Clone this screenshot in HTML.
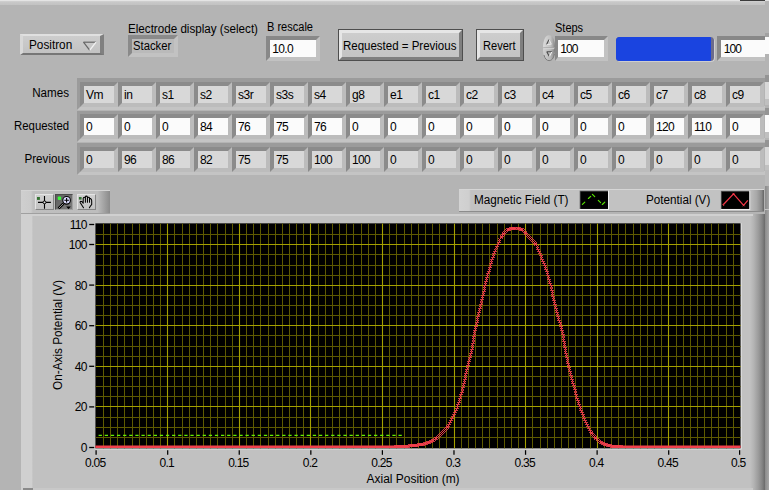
<!DOCTYPE html>
<html><head><meta charset="utf-8"><title>Electrode potentials</title>
<style>
html,body{margin:0;padding:0;}
body{width:769px;height:490px;overflow:hidden;background:#b4b4b4;position:relative;font-family:"Liberation Sans",sans-serif;font-size:12px;color:#000;}
.a{position:absolute;box-sizing:border-box;}
.t{position:absolute;white-space:pre;line-height:normal;font-family:"Liberation Sans",sans-serif;}
.frame{position:absolute;box-sizing:border-box;border:4px solid;border-color:#9b9b9b #c4c4c4 #c4c4c4 #9b9b9b;}
.cell{position:absolute;box-sizing:border-box;border:4px solid;border-color:#8b8b8b #bcbcbc #bcbcbc #8b8b8b;}
.ind{background:#d8d8d8;}
.ctl{background:#fbfbfb;}
.btn{position:absolute;box-sizing:border-box;border:1px solid #4e4e4e;background:linear-gradient(#cecece,#c3c3c3);}
.btn:before{content:"";position:absolute;left:0;top:0;right:0;bottom:0;border:3px solid;border-color:#e6e6e6 #7f7f7f #7f7f7f #e6e6e6;}
</style></head><body>

<div class="a" style="left:0;top:0;width:769px;height:1px;background:#e4e4e4"></div>
<div class="a" style="left:0;top:1px;width:765px;height:4px;background:linear-gradient(#d2d2d2,#c8c8c8 30%,#c2c2c2)"></div>
<div class="a" style="left:740px;top:0;width:25px;height:1px;background:#3c3c3c"></div>
<div class="a" style="left:20px;top:33.8px;width:84px;height:21.4px;background:linear-gradient(#cdcdcd,#c2c2c2);border-style:solid;border-width:2px 4px 2px 3px;border-color:#e0e0e0 #808080 #767676 #d8d8d8"></div>
<div class="t" style="left:28.90px;top:38.34px;font-size:12px;color:#000;transform:scaleX(0.9811);transform-origin:left center;">Positron</div>
<svg class="a" style="left:82px;top:40px" width="16" height="12" viewBox="0 0 16 12"><path d="M1.5 2.2 L14 2.2" stroke="#666" stroke-width="1.2" fill="none"/><path d="M1.5 2.2 L7.6 10.2" stroke="#666" stroke-width="1.2" fill="none"/><path d="M14 2.2 L7.8 10.2" stroke="#f2f2f2" stroke-width="1.3" fill="none"/></svg>
<div class="t" style="left:127.70px;top:21.74px;font-size:12px;color:#000;transform:scaleX(0.9697);transform-origin:left center;">Electrode display (select)</div>
<div class="cell" style="left:128px;top:34.5px;width:50px;height:22px;background:#bababa;border-color:#8a8a8a #c2c2c2 #c2c2c2 #8a8a8a"></div>
<div class="t" style="left:132.80px;top:38.64px;font-size:12px;color:#000;transform:scaleX(0.9388);transform-origin:left center;">Stacker</div>
<div class="t" style="left:267.40px;top:19.64px;font-size:12px;color:#000;transform:scaleX(0.9194);transform-origin:left center;">B rescale</div>
<div class="cell ctl" style="left:266px;top:36.3px;width:54px;height:24.6px;border-color:#888 #c2c2c2 #c2c2c2 #888"></div>
<div class="t" style="left:272.20px;top:41.74px;font-size:12px;color:#000;letter-spacing:-0.6px;">10.0</div>
<div class="btn" style="left:338px;top:28.8px;width:125px;height:32.4px"></div>
<div class="t" style="left:342.80px;top:38.64px;font-size:12px;color:#000;transform:scaleX(0.9577);transform-origin:left center;">Requested = Previous</div>
<div class="btn" style="left:475.6px;top:28.8px;width:48.6px;height:32.4px"></div>
<div class="t" style="left:483.00px;top:38.54px;font-size:12px;color:#000;transform:scaleX(0.9225);transform-origin:left center;">Revert</div>
<div class="t" style="left:554.60px;top:20.74px;font-size:12px;color:#000;transform:scaleX(0.9156);transform-origin:left center;">Steps</div>
<svg class="a" style="left:540.5px;top:34px" width="16" height="29" viewBox="0 0 16 29">
<defs><linearGradient id="sp" x1="0" x2="1" y1="0" y2="0"><stop offset="0" stop-color="#dcdcdc"/><stop offset="0.25" stop-color="#d0d0d0"/><stop offset="0.62" stop-color="#c2c2c2"/><stop offset="0.82" stop-color="#a8a8a8"/><stop offset="1" stop-color="#808080"/></linearGradient>
<linearGradient id="sp2" x1="0" x2="1" y1="0" y2="0"><stop offset="0" stop-color="#d2d2d2"/><stop offset="0.25" stop-color="#c6c6c6"/><stop offset="0.62" stop-color="#b8b8b8"/><stop offset="0.82" stop-color="#9c9c9c"/><stop offset="1" stop-color="#7a7a7a"/></linearGradient></defs>
<path d="M2 14.2 C2 7.5 3.8 1.3 8 1.3 C12.4 1.3 14 7.5 14 14.2 Z" fill="url(#sp)"/>
<path d="M2 14.4 C2 21 3.8 26.8 8 26.8 C12.4 26.8 14 21 14 14.4 Z" fill="url(#sp2)"/>
<path d="M2.2 13.7 H13.8" stroke="#a6a6a6" stroke-width="0.9"/><path d="M2.2 14.7 H13" stroke="#dadada" stroke-width="0.9"/>
<path d="M3 21 C3.8 24.6 5.6 26.6 8 26.6 C10.6 26.6 12.6 24.4 13.4 20" stroke="#7c7c7c" stroke-width="1" fill="none"/>
<path d="M5.6 10.4 L8 5.6" stroke="#4a4a4a" stroke-width="1.1" fill="none"/><path d="M8 5.6 L10.3 10.2 L5.8 10.6" stroke="#ececec" stroke-width="0.9" fill="none"/>
<path d="M5.6 17.8 L10.8 17.8 M5.8 17.8 L8.2 22.2" stroke="#4a4a4a" stroke-width="1.1" fill="none"/><path d="M10.8 18 L8.4 22.4" stroke="#f2f2f2" stroke-width="1" fill="none"/>
</svg>
<div class="cell ctl" style="left:554.8px;top:36.2px;width:53.2px;height:24.8px;border-color:#888 #c2c2c2 #c2c2c2 #888;border-left-width:3px"></div>
<div class="t" style="left:560.30px;top:41.94px;font-size:12px;color:#000;letter-spacing:-0.9px;">100</div>
<div class="a" style="left:616px;top:36.6px;width:98px;height:24.6px;border-radius:3.5px;background:#6b6b8c;box-shadow:0.8px 0.8px 0 #d6d6d6"></div>
<div class="a" style="left:616px;top:36.6px;width:95.2px;height:24.6px;border-radius:3.5px 1px 1px 3.5px;background:#1a44e0"></div>
<div class="cell ctl" style="left:717px;top:36px;width:60px;height:25px;border-color:#888 #c2c2c2 #c2c2c2 #888"></div>
<div class="t" style="left:723.70px;top:41.74px;font-size:12px;color:#000;letter-spacing:-0.9px;">100</div>
<div class="t" style="right:699.70px;top:85.94px;font-size:12px;color:#000;transform:scaleX(0.9679);transform-origin:right center;">Names</div>
<div class="frame" style="left:76.5px;top:78px;width:700px;height:32px"></div>
<div class="cell ind" style="left:80px;top:82px;width:38px;height:25px"></div>
<div class="t" style="left:85.90px;top:87.54px;font-size:12px;color:#000;letter-spacing:-0.4px;">Vm</div>
<div class="cell ind" style="left:118px;top:82px;width:38px;height:25px"></div>
<div class="t" style="left:123.90px;top:87.54px;font-size:12px;color:#000;letter-spacing:-0.4px;">in</div>
<div class="cell ind" style="left:156px;top:82px;width:38px;height:25px"></div>
<div class="t" style="left:161.90px;top:87.54px;font-size:12px;color:#000;letter-spacing:-0.4px;">s1</div>
<div class="cell ind" style="left:194px;top:82px;width:38px;height:25px"></div>
<div class="t" style="left:199.90px;top:87.54px;font-size:12px;color:#000;letter-spacing:-0.4px;">s2</div>
<div class="cell ind" style="left:232px;top:82px;width:38px;height:25px"></div>
<div class="t" style="left:237.90px;top:87.54px;font-size:12px;color:#000;letter-spacing:-0.4px;">s3r</div>
<div class="cell ind" style="left:270px;top:82px;width:38px;height:25px"></div>
<div class="t" style="left:275.90px;top:87.54px;font-size:12px;color:#000;letter-spacing:-0.4px;">s3s</div>
<div class="cell ind" style="left:308px;top:82px;width:38px;height:25px"></div>
<div class="t" style="left:313.90px;top:87.54px;font-size:12px;color:#000;letter-spacing:-0.4px;">s4</div>
<div class="cell ind" style="left:346px;top:82px;width:38px;height:25px"></div>
<div class="t" style="left:351.90px;top:87.54px;font-size:12px;color:#000;letter-spacing:-0.4px;">g8</div>
<div class="cell ind" style="left:384px;top:82px;width:38px;height:25px"></div>
<div class="t" style="left:389.90px;top:87.54px;font-size:12px;color:#000;letter-spacing:-0.4px;">e1</div>
<div class="cell ind" style="left:422px;top:82px;width:38px;height:25px"></div>
<div class="t" style="left:427.90px;top:87.54px;font-size:12px;color:#000;letter-spacing:-0.4px;">c1</div>
<div class="cell ind" style="left:460px;top:82px;width:38px;height:25px"></div>
<div class="t" style="left:465.90px;top:87.54px;font-size:12px;color:#000;letter-spacing:-0.4px;">c2</div>
<div class="cell ind" style="left:498px;top:82px;width:38px;height:25px"></div>
<div class="t" style="left:503.90px;top:87.54px;font-size:12px;color:#000;letter-spacing:-0.4px;">c3</div>
<div class="cell ind" style="left:536px;top:82px;width:38px;height:25px"></div>
<div class="t" style="left:541.90px;top:87.54px;font-size:12px;color:#000;letter-spacing:-0.4px;">c4</div>
<div class="cell ind" style="left:574px;top:82px;width:38px;height:25px"></div>
<div class="t" style="left:579.90px;top:87.54px;font-size:12px;color:#000;letter-spacing:-0.4px;">c5</div>
<div class="cell ind" style="left:612px;top:82px;width:38px;height:25px"></div>
<div class="t" style="left:617.90px;top:87.54px;font-size:12px;color:#000;letter-spacing:-0.4px;">c6</div>
<div class="cell ind" style="left:650px;top:82px;width:38px;height:25px"></div>
<div class="t" style="left:655.90px;top:87.54px;font-size:12px;color:#000;letter-spacing:-0.4px;">c7</div>
<div class="cell ind" style="left:688px;top:82px;width:38px;height:25px"></div>
<div class="t" style="left:693.90px;top:87.54px;font-size:12px;color:#000;letter-spacing:-0.4px;">c8</div>
<div class="cell ind" style="left:726px;top:82px;width:38px;height:25px"></div>
<div class="t" style="left:731.90px;top:87.54px;font-size:12px;color:#000;letter-spacing:-0.4px;">c9</div>
<div class="t" style="right:699.70px;top:119.24px;font-size:12px;color:#000;transform:scaleX(0.9475);transform-origin:right center;">Requested</div>
<div class="frame" style="left:76.5px;top:111px;width:700px;height:31px"></div>
<div class="cell ctl" style="left:80px;top:114px;width:38px;height:25px"></div>
<div class="t" style="left:85.90px;top:119.74px;font-size:12px;color:#000;letter-spacing:-0.6px;">0</div>
<div class="cell ctl" style="left:118px;top:114px;width:38px;height:25px"></div>
<div class="t" style="left:123.90px;top:119.74px;font-size:12px;color:#000;letter-spacing:-0.6px;">0</div>
<div class="cell ctl" style="left:156px;top:114px;width:38px;height:25px"></div>
<div class="t" style="left:161.90px;top:119.74px;font-size:12px;color:#000;letter-spacing:-0.6px;">0</div>
<div class="cell ctl" style="left:194px;top:114px;width:38px;height:25px"></div>
<div class="t" style="left:199.90px;top:119.74px;font-size:12px;color:#000;letter-spacing:-0.6px;">84</div>
<div class="cell ctl" style="left:232px;top:114px;width:38px;height:25px"></div>
<div class="t" style="left:237.90px;top:119.74px;font-size:12px;color:#000;letter-spacing:-0.6px;">76</div>
<div class="cell ctl" style="left:270px;top:114px;width:38px;height:25px"></div>
<div class="t" style="left:275.90px;top:119.74px;font-size:12px;color:#000;letter-spacing:-0.6px;">75</div>
<div class="cell ctl" style="left:308px;top:114px;width:38px;height:25px"></div>
<div class="t" style="left:313.90px;top:119.74px;font-size:12px;color:#000;letter-spacing:-0.6px;">76</div>
<div class="cell ctl" style="left:346px;top:114px;width:38px;height:25px"></div>
<div class="t" style="left:351.90px;top:119.74px;font-size:12px;color:#000;letter-spacing:-0.6px;">0</div>
<div class="cell ctl" style="left:384px;top:114px;width:38px;height:25px"></div>
<div class="t" style="left:389.90px;top:119.74px;font-size:12px;color:#000;letter-spacing:-0.6px;">0</div>
<div class="cell ctl" style="left:422px;top:114px;width:38px;height:25px"></div>
<div class="t" style="left:427.90px;top:119.74px;font-size:12px;color:#000;letter-spacing:-0.6px;">0</div>
<div class="cell ctl" style="left:460px;top:114px;width:38px;height:25px"></div>
<div class="t" style="left:465.90px;top:119.74px;font-size:12px;color:#000;letter-spacing:-0.6px;">0</div>
<div class="cell ctl" style="left:498px;top:114px;width:38px;height:25px"></div>
<div class="t" style="left:503.90px;top:119.74px;font-size:12px;color:#000;letter-spacing:-0.6px;">0</div>
<div class="cell ctl" style="left:536px;top:114px;width:38px;height:25px"></div>
<div class="t" style="left:541.90px;top:119.74px;font-size:12px;color:#000;letter-spacing:-0.6px;">0</div>
<div class="cell ctl" style="left:574px;top:114px;width:38px;height:25px"></div>
<div class="t" style="left:579.90px;top:119.74px;font-size:12px;color:#000;letter-spacing:-0.6px;">0</div>
<div class="cell ctl" style="left:612px;top:114px;width:38px;height:25px"></div>
<div class="t" style="left:617.90px;top:119.74px;font-size:12px;color:#000;letter-spacing:-0.6px;">0</div>
<div class="cell ctl" style="left:650px;top:114px;width:38px;height:25px"></div>
<div class="t" style="left:655.90px;top:119.74px;font-size:12px;color:#000;letter-spacing:-0.6px;">120</div>
<div class="cell ctl" style="left:688px;top:114px;width:38px;height:25px"></div>
<div class="t" style="left:693.90px;top:119.74px;font-size:12px;color:#000;letter-spacing:-0.6px;">110</div>
<div class="cell ctl" style="left:726px;top:114px;width:38px;height:25px"></div>
<div class="t" style="left:731.90px;top:119.74px;font-size:12px;color:#000;letter-spacing:-0.6px;">0</div>
<div class="t" style="right:699.70px;top:151.84px;font-size:12px;color:#000;transform:scaleX(0.9681);transform-origin:right center;">Previous</div>
<div class="frame" style="left:76.5px;top:143px;width:700px;height:32px"></div>
<div class="cell ind" style="left:80px;top:147px;width:38px;height:25px"></div>
<div class="t" style="left:85.90px;top:152.64px;font-size:12px;color:#000;letter-spacing:-0.6px;">0</div>
<div class="cell ind" style="left:118px;top:147px;width:38px;height:25px"></div>
<div class="t" style="left:123.90px;top:152.64px;font-size:12px;color:#000;letter-spacing:-0.6px;">96</div>
<div class="cell ind" style="left:156px;top:147px;width:38px;height:25px"></div>
<div class="t" style="left:161.90px;top:152.64px;font-size:12px;color:#000;letter-spacing:-0.6px;">86</div>
<div class="cell ind" style="left:194px;top:147px;width:38px;height:25px"></div>
<div class="t" style="left:199.90px;top:152.64px;font-size:12px;color:#000;letter-spacing:-0.6px;">82</div>
<div class="cell ind" style="left:232px;top:147px;width:38px;height:25px"></div>
<div class="t" style="left:237.90px;top:152.64px;font-size:12px;color:#000;letter-spacing:-0.6px;">75</div>
<div class="cell ind" style="left:270px;top:147px;width:38px;height:25px"></div>
<div class="t" style="left:275.90px;top:152.64px;font-size:12px;color:#000;letter-spacing:-0.6px;">75</div>
<div class="cell ind" style="left:308px;top:147px;width:38px;height:25px"></div>
<div class="t" style="left:313.90px;top:152.64px;font-size:12px;color:#000;letter-spacing:-0.6px;">100</div>
<div class="cell ind" style="left:346px;top:147px;width:38px;height:25px"></div>
<div class="t" style="left:351.90px;top:152.64px;font-size:12px;color:#000;letter-spacing:-0.6px;">100</div>
<div class="cell ind" style="left:384px;top:147px;width:38px;height:25px"></div>
<div class="t" style="left:389.90px;top:152.64px;font-size:12px;color:#000;letter-spacing:-0.6px;">0</div>
<div class="cell ind" style="left:422px;top:147px;width:38px;height:25px"></div>
<div class="t" style="left:427.90px;top:152.64px;font-size:12px;color:#000;letter-spacing:-0.6px;">0</div>
<div class="cell ind" style="left:460px;top:147px;width:38px;height:25px"></div>
<div class="t" style="left:465.90px;top:152.64px;font-size:12px;color:#000;letter-spacing:-0.6px;">0</div>
<div class="cell ind" style="left:498px;top:147px;width:38px;height:25px"></div>
<div class="t" style="left:503.90px;top:152.64px;font-size:12px;color:#000;letter-spacing:-0.6px;">0</div>
<div class="cell ind" style="left:536px;top:147px;width:38px;height:25px"></div>
<div class="t" style="left:541.90px;top:152.64px;font-size:12px;color:#000;letter-spacing:-0.6px;">0</div>
<div class="cell ind" style="left:574px;top:147px;width:38px;height:25px"></div>
<div class="t" style="left:579.90px;top:152.64px;font-size:12px;color:#000;letter-spacing:-0.6px;">0</div>
<div class="cell ind" style="left:612px;top:147px;width:38px;height:25px"></div>
<div class="t" style="left:617.90px;top:152.64px;font-size:12px;color:#000;letter-spacing:-0.6px;">0</div>
<div class="cell ind" style="left:650px;top:147px;width:38px;height:25px"></div>
<div class="t" style="left:655.90px;top:152.64px;font-size:12px;color:#000;letter-spacing:-0.6px;">0</div>
<div class="cell ind" style="left:688px;top:147px;width:38px;height:25px"></div>
<div class="t" style="left:693.90px;top:152.64px;font-size:12px;color:#000;letter-spacing:-0.6px;">0</div>
<div class="cell ind" style="left:726px;top:147px;width:38px;height:25px"></div>
<div class="t" style="left:731.90px;top:152.64px;font-size:12px;color:#000;letter-spacing:-0.6px;">0</div>
<div class="a" style="left:765px;top:1.5px;width:4px;height:488.5px;background:#b4b4b4"></div>
<div class="a" style="left:765px;top:33px;width:4px;height:3.5px;background:#a2a2a2"></div>
<div class="a" style="left:765px;top:36.5px;width:4px;height:17.5px;background:#fbfbfb"></div>
<div class="a" style="left:765px;top:75px;width:4px;height:7px;background:#949494"></div>
<div class="a" style="left:765px;top:82px;width:4px;height:17px;background:#d8d8d8"></div>
<div class="a" style="left:765px;top:99px;width:4px;height:6px;background:#c0c0c0"></div>
<div class="a" style="left:765px;top:107.5px;width:4px;height:7px;background:#949494"></div>
<div class="a" style="left:765px;top:114.5px;width:4px;height:17.5px;background:#fbfbfb"></div>
<div class="a" style="left:765px;top:132px;width:4px;height:6px;background:#c0c0c0"></div>
<div class="a" style="left:765px;top:140px;width:4px;height:7px;background:#949494"></div>
<div class="a" style="left:765px;top:147px;width:4px;height:17.5px;background:#d8d8d8"></div>
<div class="a" style="left:765px;top:164.5px;width:4px;height:6px;background:#c0c0c0"></div>
<div class="a" style="left:765px;top:170px;width:4px;height:16px;background:#bababa"></div>
<div class="a" style="left:764.8px;top:186px;width:4.2px;height:304px;background:linear-gradient(90deg,#8a8a8a,#a6a6a6)"></div>
<div class="a" style="left:765px;top:208.6px;width:4px;height:1.4px;background:#c6c6c6"></div>
<div class="a" style="left:21px;top:190px;width:89px;height:23.5px;background:linear-gradient(90deg,#cfcfcf 0,#cbcbcb 11%,#bfbfbf 13.5%,#bdbdbd 86%,#8a8a8a 100%);border-top:1px solid #d4d4d4;border-bottom:1px solid #a0a0a0"></div>
<div class="a" style="left:34.8px;top:194px;width:19px;height:16px;background:linear-gradient(#cfcfcf,#c2c2c2);border:1px solid;border-color:#e4e4e4 #858585 #858585 #e4e4e4"></div>
<div class="a" style="left:55.2px;top:194px;width:18px;height:16px;background:linear-gradient(135deg,#5c5c5c,#7e7e7e);border:1px solid;border-color:#4c4c4c #a0a0a0 #a0a0a0 #4c4c4c"></div>
<div class="a" style="left:76.8px;top:194px;width:19px;height:16px;background:linear-gradient(#cfcfcf,#c2c2c2);border:1px solid;border-color:#e4e4e4 #858585 #858585 #e4e4e4"></div>
<svg class="a" style="left:30px;top:188px" width="70" height="28" viewBox="0 0 70 28">
<rect x="7" y="9" width="2.9" height="2.9" fill="#347232"/>
<path d="M8 14.4 H20.9 M14.5 8.1 V20.7" stroke="#000" stroke-width="1.1" fill="none"/>
<circle cx="14.5" cy="14.4" r="1.45" fill="#dcdcdc" stroke="#000" stroke-width="1"/>
<rect x="27.8" y="8.5" width="3.3" height="3.5" rx="0.8" fill="#3dfc3d"/>
<path d="M33.4 15.6 L28.6 20.4" stroke="#000" stroke-width="2.6" fill="none"/>
<path d="M33.2 15.8 L29 20" stroke="#a8a8a8" stroke-width="0.9" fill="none"/>
<circle cx="36.6" cy="12.3" r="3.8" fill="#dcdcff" stroke="#000" stroke-width="1.1"/>
<path d="M34.3 12.3 H38.9 M36.6 10 V14.6" stroke="#000" stroke-width="1.1" fill="none"/>
<path d="M36.2 18.6 H40.8 L38.5 21.2 Z" fill="#000"/>
<rect x="48.9" y="9" width="2.7" height="2.6" fill="#347232"/>
<path d="M53.5 19.8 L50.3 14.7 Q49.7 13.4 51 13.3 Q52 13.4 53.2 15.2 V10.4 Q53.3 9.3 54.3 9.3 Q55.4 9.3 55.4 10.2 V14.2 M55.4 10 V9 Q55.5 8.1 56.5 8.1 Q57.45 8.1 57.45 9.2 V14.2 M57.45 10 Q57.6 9.3 58.6 9.3 Q59.5 9.3 59.5 10.2 V14.2 M59.5 11 Q59.8 10.4 60.5 10.5 Q61.7 11.4 61.7 12.8 V16.5 L60.6 17.8 L59.4 19.8" fill="none" stroke="#000" stroke-width="1.05" stroke-linejoin="round" stroke-linecap="round"/>
</svg>
<div class="a" style="left:459px;top:189px;width:305px;height:23px;background:linear-gradient(90deg,#d3d3d3 0,#cfcfcf 3.3%,#c2c2c2 3.9%,#c2c2c2 95%,#a8a8a8 97.6%,#8a8a8a 99.2%,#646464 100%);border-top:1px solid #d6d6d6;border-bottom:1.3px solid #8c8c8c"></div>
<div class="t" style="left:473.80px;top:192.74px;font-size:12px;color:#000;transform:scaleX(0.9772);transform-origin:left center;">Magnetic Field (T)</div>
<div class="t" style="left:645.70px;top:192.64px;font-size:12px;color:#000;transform:scaleX(0.9738);transform-origin:left center;">Potential (V)</div>
<svg class="a" style="left:579px;top:190px" width="31" height="21" viewBox="0 0 31 21">
<rect x="0.6" y="0.6" width="29.4" height="19.4" fill="#f0f0f0"/><rect x="0.6" y="0.6" width="28.4" height="18.4" fill="#5a5a5a"/><rect x="1.5" y="1.5" width="27.5" height="17.4" fill="#000"/>
<path d="M3.4 14.4 L5.8 12.1 M9.4 8.5 L11.7 6.3 M13.4 4.4 L15.7 6.7 M19.3 10.4 L21.6 12.6 M23.3 14.5 L25.8 12.1" stroke="#58e400" stroke-width="1.15" stroke-linecap="round" fill="none"/>
</svg>
<svg class="a" style="left:720px;top:190px" width="31" height="21" viewBox="0 0 31 21">
<rect x="0.8" y="0.8" width="29.4" height="19.2" fill="#f0f0f0"/><rect x="0.8" y="0.8" width="28.4" height="18.2" fill="#5a5a5a"/><rect x="1.7" y="1.7" width="27.4" height="17.2" fill="#000"/>
<path d="M3.2 14.8 L13.5 3.9 L23.6 15.3 L27.8 10.3" stroke="#f03646" stroke-width="1.25" fill="none"/>
<path d="M12.5 2.9 l2 2 m0 -2 l-2 2 M22.6 14.3 l2 2 m0 -2 l-2 2 M2.6 14.4 l1.6 1.6" stroke="#f03646" stroke-width="0.9" fill="none"/>
</svg>
<div class="a" style="left:21px;top:213.5px;width:743.5px;height:300px;background:linear-gradient(90deg,#d0d0d0 0,#d0d0d0 1.45%,#c1c1c1 1.6%,#c1c1c1 98%,#b3b3b3 98.5%,#9c9c9c 99.1%,#848484 99.6%,#6a6a6a 100%);"></div>
<div class="a" style="left:21px;top:213.5px;width:732px;height:2.4px;background:#d0d0d0"></div>
<div class="a" style="left:23px;top:487.8px;width:9.5px;height:3px;background:#8a8a8a"></div>
<div class="a" style="left:32.5px;top:487.6px;width:720px;height:3px;background:#c8c8c8"></div>
<svg class="a" style="left:0;top:0" width="769" height="490" viewBox="0 0 769 490" font-family='"Liberation Sans", sans-serif' font-size="12">
<rect x="95.4" y="223.3" width="646.2" height="226.1" fill="#ececec"/>
<rect x="95.4" y="223.3" width="645.2" height="225.1" fill="#000"/>
<clipPath id="pc"><rect x="95.4" y="223.3" width="645.2" height="225.1"/></clipPath>
<g clip-path="url(#pc)">
<path d="M103.5 223.4V448.4M110.5 223.4V448.4M117.5 223.4V448.4M124.5 223.4V448.4M132.5 223.4V448.4M139.5 223.4V448.4M146.5 223.4V448.4M153.5 223.4V448.4M160.5 223.4V448.4M174.5 223.4V448.4M182.5 223.4V448.4M189.5 223.4V448.4M196.5 223.4V448.4M203.5 223.4V448.4M210.5 223.4V448.4M217.5 223.4V448.4M225.5 223.4V448.4M232.5 223.4V448.4M246.5 223.4V448.4M253.5 223.4V448.4M260.5 223.4V448.4M268.5 223.4V448.4M275.5 223.4V448.4M282.5 223.4V448.4M289.5 223.4V448.4M296.5 223.4V448.4M303.5 223.4V448.4M318.5 223.4V448.4M325.5 223.4V448.4M332.5 223.4V448.4M339.5 223.4V448.4M346.5 223.4V448.4M353.5 223.4V448.4M361.5 223.4V448.4M368.5 223.4V448.4M375.5 223.4V448.4M389.5 223.4V448.4M396.5 223.4V448.4M404.5 223.4V448.4M411.5 223.4V448.4M418.5 223.4V448.4M425.5 223.4V448.4M432.5 223.4V448.4M439.5 223.4V448.4M446.5 223.4V448.4M461.5 223.4V448.4M468.5 223.4V448.4M475.5 223.4V448.4M482.5 223.4V448.4M489.5 223.4V448.4M497.5 223.4V448.4M504.5 223.4V448.4M511.5 223.4V448.4M518.5 223.4V448.4M532.5 223.4V448.4M540.5 223.4V448.4M547.5 223.4V448.4M554.5 223.4V448.4M561.5 223.4V448.4M568.5 223.4V448.4M575.5 223.4V448.4M582.5 223.4V448.4M590.5 223.4V448.4M604.5 223.4V448.4M611.5 223.4V448.4M618.5 223.4V448.4M625.5 223.4V448.4M633.5 223.4V448.4M640.5 223.4V448.4M647.5 223.4V448.4M654.5 223.4V448.4M661.5 223.4V448.4M676.5 223.4V448.4M683.5 223.4V448.4M690.5 223.4V448.4M697.5 223.4V448.4M704.5 223.4V448.4M711.5 223.4V448.4M718.5 223.4V448.4M726.5 223.4V448.4M733.5 223.4V448.4M95.6 234.5H741.4M95.6 254.5H741.4M95.6 265.5H741.4M95.6 275.5H741.4M95.6 295.5H741.4M95.6 305.5H741.4M95.6 315.5H741.4M95.6 335.5H741.4M95.6 346.5H741.4M95.6 356.5H741.4M95.6 376.5H741.4M95.6 386.5H741.4M95.6 396.5H741.4M95.6 417.5H741.4M95.6 427.5H741.4M95.6 437.5H741.4" stroke="#5e5a00" stroke-width="1.05" fill="none"/>
<path d="M167.5 223.4V448.4M239.5 223.4V448.4M310.5 223.4V448.4M382.5 223.4V448.4M454.5 223.4V448.4M525.5 223.4V448.4M597.5 223.4V448.4M668.5 223.4V448.4M95.6 244.5H741.4M95.6 285.5H741.4M95.6 325.5H741.4M95.6 366.5H741.4M95.6 406.5H741.4" stroke="#a4a000" stroke-width="1.1" fill="none"/>
<path d="M98.6 435.4 H403.4" stroke="#66f000" stroke-width="1.1" stroke-dasharray="3.3 2.82" fill="none"/>
<marker id="mk" markerWidth="3" markerHeight="3" refX="1.5" refY="1.5" markerUnits="userSpaceOnUse"><path d="M0.15 0.15L2.85 2.85M2.85 0.15L0.15 2.85" stroke="#f2404c" stroke-width="1.0" fill="none"/></marker>
<path d="M94.6 446.7H396M621 446.7H741.4" stroke="#f2404c" stroke-width="2.5" fill="none"/>
<polyline points="395.5,446.5 396.5,446.5 397.5,446.5 398.5,446.5 399.5,446.5 400.5,446.5 401.5,446.5 402.5,446.5 403.5,446.5 404.5,446.5 405.5,446.5 406.5,446.5 407.5,446.5 408.5,446.5 409.5,445.5 410.5,445.5 411.5,445.5 412.5,445.5 413.5,445.5 414.5,445.5 415.5,445.5 416.5,445.5 417.5,445.5 418.5,444.5 419.5,444.5 420.5,444.5 421.5,444.5 422.5,444.5 423.5,444.5 424.5,443.5 425.5,443.5 426.5,443.5 427.5,442.5 428.5,442.5 429.5,442.5 430.5,441.5 431.5,441.5 432.5,440.5 433.5,440.5 434.5,439.5 435.5,438.5 436.5,438.5 437.5,437.5 438.5,436.5 439.5,435.5 440.5,434.5 441.5,433.5 442.5,432.5 443.5,431.5 444.5,430.5 445.5,429.5 446.5,428.5 447.5,427.5 447.5,426.5 448.5,425.5 449.5,423.5 450.5,421.5 451.5,419.5 452.5,417.5 453.5,415.5 454.5,413.5 455.5,411.5 456.5,409.5 457.5,407.5 457.5,405.5 458.5,403.5 459.5,401.5 459.5,399.5 460.5,397.5 460.5,395.5 461.5,393.5 462.5,391.5 462.5,388.5 463.5,386.5 463.5,384.5 464.5,382.5 464.5,380.5 465.5,378.5 465.5,376.5 465.5,374.5 466.5,372.5 466.5,370.5 467.5,368.5 467.5,366.5 468.5,364.5 468.5,362.5 469.5,360.5 469.5,358.5 470.5,356.5 470.5,354.5 471.5,352.5 471.5,350.5 472.5,348.5 472.5,346.5 472.5,344.5 473.5,342.5 473.5,339.5 473.5,337.5 474.5,335.5 474.5,333.5 474.5,331.5 475.5,329.5 475.5,327.5 476.5,325.5 476.5,323.5 477.5,321.5 477.5,319.5 477.5,317.5 478.5,315.5 478.5,313.5 479.5,311.5 479.5,309.5 480.5,307.5 480.5,305.5 481.5,303.5 481.5,300.5 482.5,298.5 482.5,296.5 483.5,294.5 483.5,292.5 484.5,290.5 484.5,288.5 484.5,286.5 485.5,284.5 485.5,282.5 486.5,280.5 486.5,278.5 487.5,276.5 487.5,274.5 488.5,272.5 489.5,270.5 489.5,268.5 490.5,266.5 490.5,264.5 491.5,262.5 491.5,260.5 492.5,258.5 493.5,256.5 493.5,254.5 494.5,252.5 495.5,250.5 496.5,247.5 497.5,245.5 498.5,243.5 499.5,241.5 499.5,239.5 501.5,237.5 501.5,236.5 502.5,235.5 503.5,234.5 503.5,233.5 504.5,232.5 505.5,231.5 506.5,230.5 507.5,229.5 508.5,229.5 509.5,229.5 510.5,228.5 511.5,228.5 512.5,228.5 513.5,228.5 514.5,228.5 515.5,228.5 517.5,228.5 518.5,228.5 519.5,228.5 520.5,229.5 521.5,229.5 522.5,229.5 523.5,230.5 524.5,231.5 525.5,232.5 525.5,233.5 526.5,234.5 527.5,235.5 528.5,236.5 529.5,237.5 530.5,238.5 531.5,239.5 532.5,240.5 533.5,241.5 534.5,242.5 535.5,243.5 535.5,244.5 537.5,246.5 537.5,248.5 538.5,250.5 539.5,252.5 540.5,254.5 541.5,256.5 541.5,258.5 542.5,260.5 543.5,262.5 544.5,264.5 545.5,266.5 545.5,268.5 546.5,270.5 547.5,272.5 547.5,274.5 548.5,276.5 548.5,278.5 549.5,280.5 549.5,282.5 550.5,284.5 551.5,286.5 551.5,289.5 552.5,291.5 552.5,293.5 552.5,295.5 553.5,297.5 553.5,299.5 554.5,301.5 554.5,303.5 555.5,305.5 555.5,307.5 556.5,309.5 556.5,311.5 557.5,313.5 557.5,315.5 558.5,317.5 558.5,319.5 559.5,321.5 560.5,323.5 560.5,325.5 561.5,327.5 561.5,329.5 562.5,331.5 562.5,333.5 563.5,335.5 563.5,338.5 563.5,340.5 564.5,342.5 564.5,344.5 564.5,346.5 565.5,348.5 565.5,350.5 565.5,352.5 566.5,354.5 566.5,356.5 567.5,358.5 567.5,360.5 567.5,362.5 568.5,364.5 568.5,366.5 569.5,368.5 569.5,370.5 570.5,372.5 570.5,374.5 571.5,376.5 571.5,378.5 572.5,380.5 572.5,382.5 573.5,384.5 574.5,386.5 574.5,388.5 575.5,390.5 575.5,393.5 576.5,395.5 576.5,397.5 577.5,399.5 578.5,401.5 578.5,403.5 579.5,405.5 580.5,407.5 580.5,409.5 581.5,411.5 582.5,413.5 583.5,415.5 583.5,417.5 584.5,419.5 585.5,421.5 586.5,423.5 587.5,425.5 588.5,427.5 589.5,429.5 590.5,431.5 591.5,432.5 591.5,433.5 592.5,434.5 593.5,435.5 594.5,436.5 595.5,437.5 595.5,438.5 597.5,439.5 598.5,440.5 599.5,441.5 600.5,442.5 601.5,442.5 602.5,443.5 603.5,443.5 604.5,444.5 605.5,444.5 606.5,444.5 607.5,445.5 608.5,445.5 609.5,445.5 610.5,445.5 611.5,446.5 612.5,446.5 613.5,446.5 614.5,446.5 615.5,446.5 616.5,446.5 617.5,446.5 618.5,446.5 619.5,446.5 620.5,446.5 621.5,446.5" fill="none" stroke="#f2404c" stroke-width="0.6" marker-start="url(#mk)" marker-mid="url(#mk)" marker-end="url(#mk)"/>
</g>
<path d="M89.2 447.50H94.2" stroke="#000" stroke-width="1.3"/>
<text x="86.6" y="452.00" text-anchor="end" letter-spacing="-0.75">0</text>
<path d="M89.2 406.90H94.2" stroke="#000" stroke-width="1.3"/>
<text x="86.6" y="411.40" text-anchor="end" letter-spacing="-0.75">20</text>
<path d="M89.2 366.30H94.2" stroke="#000" stroke-width="1.3"/>
<text x="86.6" y="370.80" text-anchor="end" letter-spacing="-0.75">40</text>
<path d="M89.2 325.70H94.2" stroke="#000" stroke-width="1.3"/>
<text x="86.6" y="330.20" text-anchor="end" letter-spacing="-0.75">60</text>
<path d="M89.2 285.10H94.2" stroke="#000" stroke-width="1.3"/>
<text x="86.6" y="289.60" text-anchor="end" letter-spacing="-0.75">80</text>
<path d="M89.2 244.50H94.2" stroke="#000" stroke-width="1.3"/>
<text x="86.6" y="249.00" text-anchor="end" letter-spacing="-0.75">100</text>
<path d="M89.2 224.50H94.2" stroke="#000" stroke-width="1.3"/>
<text x="86.6" y="229.00" text-anchor="end" letter-spacing="-0.75">110</text>
<path d="M96.10 450.2V454.8" stroke="#000" stroke-width="1.25"/>
<text x="95.20" y="466.5" text-anchor="middle" letter-spacing="-0.75">0.05</text>
<path d="M167.68 450.2V454.8" stroke="#000" stroke-width="1.25"/>
<text x="166.78" y="466.5" text-anchor="middle" letter-spacing="-0.75">0.1</text>
<path d="M239.25 450.2V454.8" stroke="#000" stroke-width="1.25"/>
<text x="238.35" y="466.5" text-anchor="middle" letter-spacing="-0.75">0.15</text>
<path d="M310.83 450.2V454.8" stroke="#000" stroke-width="1.25"/>
<text x="309.93" y="466.5" text-anchor="middle" letter-spacing="-0.75">0.2</text>
<path d="M382.40 450.2V454.8" stroke="#000" stroke-width="1.25"/>
<text x="381.50" y="466.5" text-anchor="middle" letter-spacing="-0.75">0.25</text>
<path d="M453.98 450.2V454.8" stroke="#000" stroke-width="1.25"/>
<text x="453.07" y="466.5" text-anchor="middle" letter-spacing="-0.75">0.3</text>
<path d="M525.55 450.2V454.8" stroke="#000" stroke-width="1.25"/>
<text x="524.65" y="466.5" text-anchor="middle" letter-spacing="-0.75">0.35</text>
<path d="M597.12 450.2V454.8" stroke="#000" stroke-width="1.25"/>
<text x="596.23" y="466.5" text-anchor="middle" letter-spacing="-0.75">0.4</text>
<path d="M668.70 450.2V454.8" stroke="#000" stroke-width="1.25"/>
<text x="667.80" y="466.5" text-anchor="middle" letter-spacing="-0.75">0.45</text>
<path d="M739.60 450.2V454.8" stroke="#000" stroke-width="1.25"/>
<text x="738.20" y="466.5" text-anchor="middle" letter-spacing="-0.75">0.5</text>
<text x="413.1" y="483.4" text-anchor="middle" textLength="93" lengthAdjust="spacingAndGlyphs">Axial Position (m)</text>
<text transform="translate(61.6 335) rotate(-90)" text-anchor="middle" textLength="110" lengthAdjust="spacingAndGlyphs">On-Axis Potential (V)</text>
</svg>
</body></html>
